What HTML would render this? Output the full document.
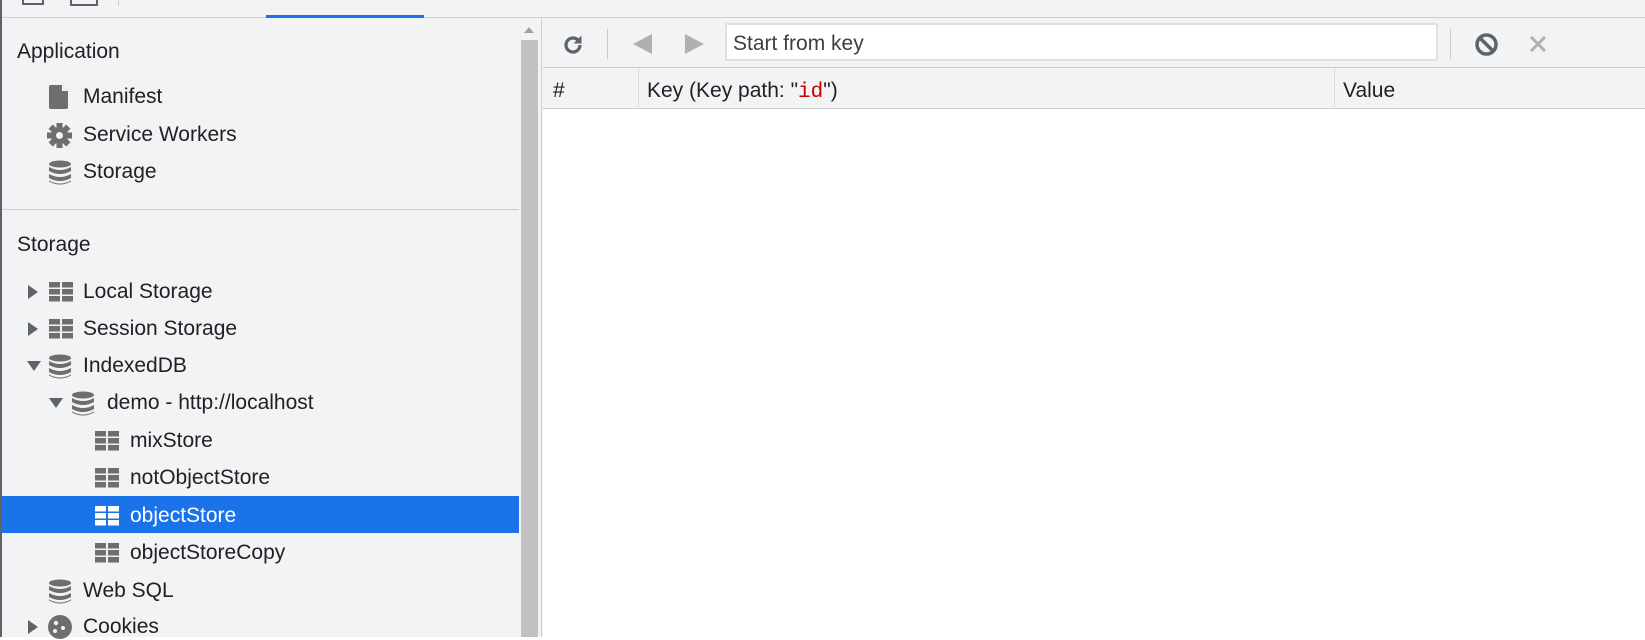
<!DOCTYPE html>
<html><head><style>
*{margin:0;padding:0;box-sizing:border-box}
body{width:1645px;height:637px;overflow:hidden;background:#fff;font-family:"Liberation Sans",sans-serif;color:#202124;position:relative}
.a{position:absolute}
.t{position:absolute;font-size:21px;line-height:24px;white-space:nowrap}
</style></head><body>
<div class="a" style="left:0;top:0;width:1645px;height:18px;background:#f1f3f4;border-bottom:1px solid #cbcdd1"></div>
<div class="a" style="left:266px;top:15px;width:158px;height:3px;background:#1a73e8"></div>
<div class="a" style="left:22px;top:0;width:22px;height:5px;border:2px solid #5f6368;border-top:none"></div>
<div class="a" style="left:70px;top:0;width:28px;height:6px;border:2px solid #5f6368;border-top:none"></div>
<div class="a" style="left:118px;top:0;width:1px;height:6px;background:#ccc"></div>
<div class="a" style="left:0;top:18px;width:543px;height:619px;background:#f1f3f4"></div>
<div class="a" style="left:0;top:0;width:2px;height:637px;background:#5f6368"></div>
<div class="a" style="left:521px;top:40px;width:17px;height:597px;background:#c1c1c1"></div>
<div class="a" style="left:524px;top:27px;width:0;height:0;border-left:5px solid transparent;border-right:5px solid transparent;border-bottom:6px solid #a0a0a0"></div>
<div class="a" style="left:541px;top:18px;width:1px;height:619px;background:#cbcdd1"></div>
<div class="t" style="left:17px;top:40px">Application</div>
<svg class="a" style="left:48px;top:84px" width="22" height="26" viewBox="0 0 22 26"><path d="M3 1h11l6 6v16a2 2 0 0 1-2 2H3a2 2 0 0 1-2-2V3a2 2 0 0 1 2-2z" fill="#6e6e6e"/><path d="M14 1v6h6" fill="#f1f3f4"/></svg>
<div class="t" style="left:83px;top:85px">Manifest</div>
<svg class="a" style="left:47px;top:123px" width="25" height="25" viewBox="-12.5 -12.5 25 25"><g fill="#6e6e6e"><circle r="8.5"/><rect x="-3" y="-12.5" width="6" height="25"/><rect x="-3" y="-12.5" width="6" height="25" transform="rotate(45)"/><rect x="-3" y="-12.5" width="6" height="25" transform="rotate(90)"/><rect x="-3" y="-12.5" width="6" height="25" transform="rotate(135)"/></g><circle r="3.5" fill="#f1f3f4"/></svg>
<div class="t" style="left:83px;top:123px">Service Workers</div>
<svg class="a" style="left:48px;top:160px" width="24" height="25" viewBox="0 0 24 25"><g fill="#6e6e6e"><ellipse cx="12" cy="4" rx="11" ry="3.5"/><path d="M1 7q11 6 22 0v4q-11 6-22 0z"/><path d="M1 14q11 6 22 0v4q-11 6-22 0z"/><path d="M1 20.5q11 6 22 0v1q-11 6-22 0z"/></g></svg>
<div class="t" style="left:83px;top:160px">Storage</div>
<div class="a" style="left:2px;top:209px;width:517px;height:1px;background:#cbcdd1"></div>
<div class="t" style="left:17px;top:233px">Storage</div>

<div class="a" style="left:2px;top:496px;width:517px;height:37px;background:#1a73e8"></div>

<svg width="0" height="0" style="position:absolute"><defs>
<g id="grid"><rect x="0" y="0" width="11" height="5.5"/><rect x="13" y="0" width="11" height="5.5"/><rect x="0" y="7" width="11" height="5.5"/><rect x="13" y="7" width="11" height="5.5"/><rect x="0" y="14" width="11" height="5.5"/><rect x="13" y="14" width="11" height="5.5"/></g>
<g id="db"><ellipse cx="12" cy="4" rx="11" ry="3.5"/><path d="M1 7q11 6 22 0v4q-11 6-22 0z"/><path d="M1 14q11 6 22 0v4q-11 6-22 0z"/><path d="M1 20.5q11 6 22 0v1q-11 6-22 0z"/></g>
</defs></svg>

<div class="a" style="left:28px;top:285px;border-top:7px solid transparent;border-bottom:7px solid transparent;border-left:10px solid #5f6368"></div>
<svg class="a" style="left:49px;top:282px" width="24" height="20" fill="#6e6e6e"><use href="#grid"/></svg>
<div class="t" style="left:83px;top:280px">Local Storage</div>
<div class="a" style="left:28px;top:322px;border-top:7px solid transparent;border-bottom:7px solid transparent;border-left:10px solid #5f6368"></div>
<svg class="a" style="left:49px;top:319px" width="24" height="20" fill="#6e6e6e"><use href="#grid"/></svg>
<div class="t" style="left:83px;top:317px">Session Storage</div>
<div class="a" style="left:27px;top:361px;border-left:7px solid transparent;border-right:7px solid transparent;border-top:10px solid #5f6368"></div>
<svg class="a" style="left:48px;top:354px" width="24" height="25" fill="#6e6e6e"><use href="#db"/></svg>
<div class="t" style="left:83px;top:354px">IndexedDB</div>
<div class="a" style="left:49px;top:398px;border-left:7px solid transparent;border-right:7px solid transparent;border-top:10px solid #5f6368"></div>
<svg class="a" style="left:71px;top:391px" width="24" height="25" fill="#6e6e6e"><use href="#db"/></svg>
<div class="t" style="left:107px;top:391px">demo - http://localhost</div>
<svg class="a" style="left:95px;top:431px" width="24" height="20" fill="#6e6e6e"><use href="#grid"/></svg>
<div class="t" style="left:130px;top:429px">mixStore</div>
<svg class="a" style="left:95px;top:468px" width="24" height="20" fill="#6e6e6e"><use href="#grid"/></svg>
<div class="t" style="left:130px;top:466px">notObjectStore</div>
<svg class="a" style="left:95px;top:506px" width="24" height="20" fill="#fff"><use href="#grid"/></svg>
<div class="t" style="left:130px;top:504px;color:#fff">objectStore</div>
<svg class="a" style="left:95px;top:543px" width="24" height="20" fill="#6e6e6e"><use href="#grid"/></svg>
<div class="t" style="left:130px;top:541px">objectStoreCopy</div>
<svg class="a" style="left:48px;top:579px" width="24" height="25" fill="#6e6e6e"><use href="#db"/></svg>
<div class="t" style="left:83px;top:579px">Web SQL</div>
<div class="a" style="left:28px;top:620px;border-top:7px solid transparent;border-bottom:7px solid transparent;border-left:10px solid #5f6368"></div>
<svg class="a" style="left:47px;top:614px" width="26" height="26" viewBox="0 0 26 26"><circle cx="13" cy="13" r="12" fill="#6e6e6e"/><circle cx="9" cy="9" r="2.2" fill="#f1f3f4"/><circle cx="16" cy="14" r="2" fill="#f1f3f4"/><circle cx="8" cy="17" r="2" fill="#f1f3f4"/></svg>
<div class="t" style="left:83px;top:615px">Cookies</div>

<div class="a" style="left:543px;top:18px;width:1102px;height:50px;background:#f1f3f4;border-bottom:1px solid #cbcdd1"></div>
<svg class="a" style="left:561px;top:33px" width="24" height="24" viewBox="0 0 24 24"><path d="M19 12a7 7 0 1 1-2.1-5" fill="none" stroke="#5f6368" stroke-width="3.2"/><path d="M20.5 2.5v8h-8z" fill="#5f6368"/></svg>
<div class="a" style="left:607px;top:29px;width:1px;height:30px;background:#ccc"></div>
<div class="a" style="left:633px;top:34px;border-top:10px solid transparent;border-bottom:10px solid transparent;border-right:19px solid #b0b0b0"></div>
<div class="a" style="left:685px;top:34px;border-top:10px solid transparent;border-bottom:10px solid transparent;border-left:19px solid #b0b0b0"></div>
<div class="a" style="left:725px;top:23px;width:713px;height:38px;background:#fff;border:2px solid #e0e0e0"></div>
<div class="t" style="left:733px;top:32px;color:#3c4043">Start from key</div>
<div class="a" style="left:1450px;top:29px;width:1px;height:30px;background:#ccc"></div>
<svg class="a" style="left:1474px;top:32px" width="25" height="25" viewBox="0 0 25 25"><circle cx="12.5" cy="12.5" r="9.5" fill="none" stroke="#5f6368" stroke-width="3.5"/><path d="M6 6l13 13" stroke="#5f6368" stroke-width="3.5"/></svg>
<svg class="a" style="left:1529px;top:35px" width="18" height="18" viewBox="0 0 18 18"><path d="M2 2l14 14M16 2L2 16" stroke="#b0b0b0" stroke-width="3"/></svg>
<div class="a" style="left:543px;top:68px;width:1102px;height:41px;background:#f1f3f4;border-bottom:1px solid #cbcdd1"></div>
<div class="a" style="left:638px;top:68px;width:1px;height:41px;background:#dadce0"></div>
<div class="a" style="left:1334px;top:68px;width:1px;height:41px;background:#dadce0"></div>
<div class="t" style="left:553px;top:79px">#</div>
<div class="t" style="left:647px;top:79px">Key (Key path: "<span style="color:#c80000;font-family:'Liberation Mono',monospace">id</span>")</div>
<div class="t" style="left:1343px;top:79px">Value</div>
</body></html>
